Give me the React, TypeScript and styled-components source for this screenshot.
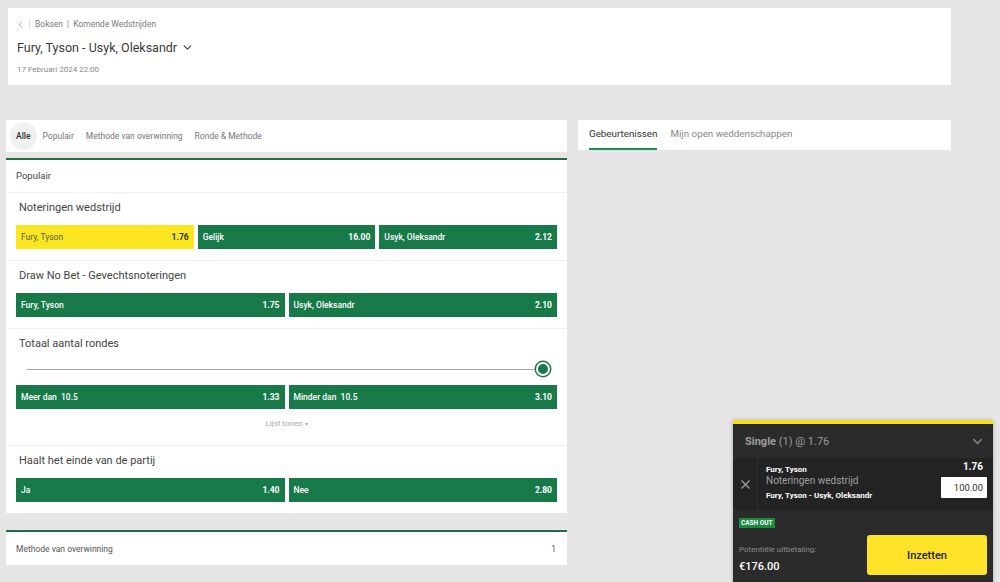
import React from 'react';
import styled, {createGlobalStyle} from "styled-components";

const GlobalStyle = createGlobalStyle`
    html, body {
        margin: 0;
        padding: 0;
        background: #e6e6e6;
        font-family: Roboto, "Liberation Sans", Arial, sans-serif;
        color: #333;
    }
    body {
        width: 1000px;
        height: 582px;
        overflow: hidden;
        position: relative;
    }
`

type Outcome = {
    label: string
    odds: string
    selected?: boolean
}

type MarketProps = {
    title: string
    outcomes: Outcome[]
    children?: React.ReactNode
    footer?: React.ReactNode
}

const Market = (props: MarketProps) => {
    return (
        <StyledMarket>
            <MarketTitle>{props.title}</MarketTitle>
            {props.children}
            <OutcomeRow $count={props.outcomes.length}>
                {props.outcomes.map(o => (
                    <OddsButton key={o.label} $selected={o.selected}>
                        <span>{o.label}</span>
                        <b>{o.odds}</b>
                    </OddsButton>
                ))}
            </OutcomeRow>
            {props.footer}
        </StyledMarket>
    );
};

const Chevron = ({color = "#555", size = 10}: { color?: string, size?: number }) => (
    <svg width={size} height={size} viewBox="0 0 10 10" fill="none">
        <path d="M2 3.5 L5 6.5 L8 3.5" stroke={color} strokeWidth="1.1" strokeLinecap="round" strokeLinejoin="round"/>
    </svg>
);

export default function App() {
    return (
        <Page>
            <GlobalStyle/>
            <HeaderCard>
                <Breadcrumb>
                    <svg width="8" height="8" viewBox="0 0 8 8" fill="none">
                        <path d="M5 1 L2 4 L5 7" stroke="#aaa" strokeWidth="0.9"/>
                    </svg>
                    <BreadSep/>
                    <span>Boksen</span>
                    <BreadBar>|</BreadBar>
                    <span>Komende Wedstrijden</span>
                </Breadcrumb>
                <EventTitle>
                    Fury, Tyson - Usyk, Oleksandr
                    <Chevron color="#444" size={11}/>
                </EventTitle>
                <EventDate>17 Februari 2024 22:00</EventDate>
            </HeaderCard>

            <Main>
                <LeftColumn>
                    <TabsCard>
                        <FilterTab $active>Alle</FilterTab>
                        <FilterTab>Populair</FilterTab>
                        <FilterTab>Methode van overwinning</FilterTab>
                        <FilterTab>Ronde &amp; Methode</FilterTab>
                    </TabsCard>

                    <GroupCard>
                        <GroupHeader>Populair</GroupHeader>
                        <Market
                            title="Noteringen wedstrijd"
                            outcomes={[
                                {label: "Fury, Tyson", odds: "1.76", selected: true},
                                {label: "Gelijk", odds: "16.00"},
                                {label: "Usyk, Oleksandr", odds: "2.12"},
                            ]}
                        />
                        <Market
                            title="Draw No Bet - Gevechtsnoteringen"
                            outcomes={[
                                {label: "Fury, Tyson", odds: "1.75"},
                                {label: "Usyk, Oleksandr", odds: "2.10"},
                            ]}
                        />
                        <Market
                            title="Totaal aantal rondes"
                            outcomes={[
                                {label: "Meer dan\u00a0\u00a010.5", odds: "1.33"},
                                {label: "Minder dan\u00a0\u00a010.5", odds: "3.10"},
                            ]}
                            footer={<ShowList>Lijst tonen <small>▾</small></ShowList>}
                        >
                            <Slider>
                                <SliderTrack/>
                                <SliderKnob/>
                            </Slider>
                        </Market>
                        <Market
                            title="Haalt het einde van de partij"
                            outcomes={[
                                {label: "Ja", odds: "1.40"},
                                {label: "Nee", odds: "2.80"},
                            ]}
                        />
                    </GroupCard>

                    <CollapsedCard>
                        <span>Methode van overwinning</span>
                        <span>1</span>
                    </CollapsedCard>
                </LeftColumn>

                <RightColumn>
                    <SideTabs>
                        <SideTab $active>Gebeurtenissen</SideTab>
                        <SideTab>Mijn open weddenschappen</SideTab>
                    </SideTabs>
                </RightColumn>
            </Main>

            <BetSlip>
                <SlipHeader>
                    <span>Single <em>(1) @ 1.76</em></span>
                    <Chevron color="#8a8a8a" size={13}/>
                </SlipHeader>
                <Selection>
                    <RemoveCell>
                        <svg width="11" height="11" viewBox="0 0 11 11">
                            <path d="M1.5 1.5 L9.5 9.5 M9.5 1.5 L1.5 9.5" stroke="#9a9a9a" strokeWidth="1.4"/>
                        </svg>
                    </RemoveCell>
                    <SelectionInfo>
                        <strong>Fury, Tyson</strong>
                        <MarketName>Noteringen wedstrijd</MarketName>
                        <strong>Fury, Tyson - Usyk, Oleksandr</strong>
                    </SelectionInfo>
                    <StakeCell>
                        <strong>1.76</strong>
                        <StakeInput>100.00</StakeInput>
                    </StakeCell>
                </Selection>
                <SlipFooter>
                    <CashOut>CASH OUT</CashOut>
                    <PayoutRow>
                        <Payout>
                            <span>Potentiële uitbetaling:</span>
                            <b>€176.00</b>
                        </Payout>
                        <PlaceButton>Inzetten</PlaceButton>
                    </PayoutRow>
                </SlipFooter>
            </BetSlip>
        </Page>
    );
}

const Page = styled.div`
    padding: 8px 49px 0 8px;
`
const HeaderCard = styled.div`
    background: #fff;
    height: 77px;
    box-sizing: border-box;
    padding: 11px 0 0 9px;
`
const Breadcrumb = styled.div`
    display: flex;
    align-items: center;
    gap: 4px;
    font-size: 8.5px;
    color: #7a7a7a;
    height: 10px;
    svg {
        margin-top: 1px;
    }
`
const BreadSep = styled.i`
    width: 1px;
    height: 8px;
    background: #ddd;
    margin-right: 1px;
`
const BreadBar = styled.span`
    color: #888;
`
const EventTitle = styled.div`
    display: flex;
    align-items: center;
    gap: 5px;
    margin-top: 10px;
    font-size: 12.5px;
    color: #3a3a3a;
    height: 16px;
`
const EventDate = styled.div`
    margin-top: 10px;
    font-size: 8px;
    color: #888;
`
const Main = styled.div`
    display: grid;
    grid-template-columns: 561px 373px;
    gap: 11px;
    margin: 35px 0 0 -2px;
    align-items: start;
`
const LeftColumn = styled.div`
    display: flex;
    flex-direction: column;
`
const TabsCard = styled.div`
    background: #fff;
    height: 32px;
    display: flex;
    align-items: center;
    padding-left: 4px;
`
const FilterTab = styled.div<{ $active?: boolean }>`
    font-size: 8.5px;
    color: ${p => p.$active ? "#333" : "#777"};
    font-weight: ${p => p.$active ? 500 : 400};
    padding: 0 6px;
    height: 28px;
    line-height: 28px;
    border-radius: 14px;
    background: ${p => p.$active ? "#f1f1f1" : "transparent"};
`
const GroupCard = styled.div`
    margin-top: 6px;
    background: #fff;
    border-top: 2px solid #1d6e45;
`
const GroupHeader = styled.div`
    height: 32px;
    line-height: 31px;
    padding-left: 10px;
    font-size: 9.5px;
    color: #444;
    border-bottom: 1px solid #efefef;
`
const StyledMarket = styled.div`
    padding: 6px 10px 11px;
    border-bottom: 1px solid #efefef;
    &:last-child {
        border-bottom: none;
        padding-bottom: 11px;
    }
`
const MarketTitle = styled.div`
    font-size: 11px;
    color: #444;
    height: 18px;
    line-height: 18px;
    padding-left: 3px;
    margin-bottom: 8px;
`
const OutcomeRow = styled.div<{ $count: number }>`
    display: grid;
    grid-template-columns: repeat(${p => p.$count}, 1fr);
    gap: 4px;
`
const OddsButton = styled.div<{ $selected?: boolean }>`
    height: 24px;
    display: flex;
    align-items: center;
    justify-content: space-between;
    padding: 0 5px;
    font-size: 8.5px;
    background: ${p => p.$selected ? "#fce622" : "#177a48"};
    color: ${p => p.$selected ? "#5b5a3a" : "#fff"};
    span {
        font-weight: ${p => p.$selected ? 400 : 500};
    }
    b {
        font-size: 8.5px;
        font-weight: 700;
        color: ${p => p.$selected ? "#333" : "#fff"};
    }
`
const Slider = styled.div`
    display: flex;
    align-items: center;
    padding: 0 7px 0 11px;
    height: 16px;
    margin: 4px 0 8px;
`
const SliderTrack = styled.div`
    flex: 1;
    height: 1px;
    background: #a6a6a6;
`
const SliderKnob = styled.div`
    width: 10px;
    height: 10px;
    border-radius: 50%;
    background: #177a48;
    border: 2px solid #fff;
    box-shadow: 0 0 0 1.5px #177a48;
`
const ShowList = styled.div`
    text-align: center;
    font-size: 8px;
    color: #a8a8a8;
    margin-top: 10px;
    margin-bottom: 6px;
    small {
        font-size: 6px;
    }
`
const CollapsedCard = styled.div`
    margin-top: 17px;
    background: #fff;
    border-top: 2px solid #1d6e45;
    height: 33px;
    display: flex;
    align-items: center;
    justify-content: space-between;
    padding: 0 11px 0 10px;
    font-size: 8.5px;
    color: #555;
`
const RightColumn = styled.div``
const SideTabs = styled.div`
    background: #fff;
    height: 30px;
    display: flex;
    padding-left: 11px;
    gap: 13px;
`
const SideTab = styled.div<{ $active?: boolean }>`
    font-size: 9.8px;
    color: ${p => p.$active ? "#333" : "#888"};
    line-height: 28px;
    border-bottom: 2px solid ${p => p.$active ? "#1f8a57" : "transparent"};
`
const BetSlip = styled.div`
    position: absolute;
    left: 733px;
    top: 420px;
    width: 260px;
    height: 170px;
    background: #2b2b2b;
    border-top: 4px solid #f7de1e;
    box-shadow: 0 0 4px rgba(0, 0, 0, 0.25);
    color: #fff;
`
const SlipHeader = styled.div`
    height: 34px;
    display: flex;
    align-items: center;
    justify-content: space-between;
    padding: 0 9px 0 12px;
    font-size: 11px;
    color: #9c9c9c;
    font-weight: 700;
    em {
        font-style: normal;
        font-weight: 400;
    }
`
const Selection = styled.div`
    height: 52px;
    background: #232323;
    display: flex;
`
const RemoveCell = styled.div`
    width: 24px;
    border-right: 1px solid #2f2f2f;
    display: flex;
    align-items: center;
    justify-content: center;
`
const SelectionInfo = styled.div`
    flex: 1;
    padding: 7px 0 0 8px;
    display: flex;
    flex-direction: column;
    font-size: 8px;
    strong {
        font-weight: 700;
        line-height: 10px;
    }
    strong:last-child {
        margin-top: 4px;
    }
`
const MarketName = styled.span`
    font-size: 10px;
    color: #a0a0a0;
    line-height: 12px;
`
const StakeCell = styled.div`
    display: flex;
    flex-direction: column;
    align-items: flex-end;
    padding: 3px 6px 0 0;
    strong {
        font-size: 10px;
        font-weight: 700;
        margin-right: 4px;
        line-height: 12px;
    }
`
const StakeInput = styled.div`
    margin-top: 4px;
    width: 46px;
    height: 21px;
    box-sizing: border-box;
    background: #fff;
    color: #333;
    font-size: 9.5px;
    text-align: right;
    line-height: 21px;
    padding-right: 4px;
    border-radius: 1px;
`
const SlipFooter = styled.div`
    padding: 8px 6px 0 6px;
`
const CashOut = styled.div`
    width: fit-content;
    background: #1b8a3e;
    color: #fff;
    font-size: 6.5px;
    font-weight: 700;
    padding: 1px 2px;
    line-height: 8px;
`
const PayoutRow = styled.div`
    display: flex;
    justify-content: space-between;
    align-items: flex-start;
    margin-top: 7px;
`
const Payout = styled.div`
    display: flex;
    flex-direction: column;
    margin-top: 10px;
    span {
        font-size: 8px;
        color: #8c8c8c;
        line-height: 10px;
    }
    b {
        font-size: 11px;
        font-weight: 500;
        margin-top: 5px;
        line-height: 14px;
    }
`
const PlaceButton = styled.div`
    width: 120px;
    height: 40px;
    background: #fde428;
    border-radius: 3px;
    color: #222;
    font-size: 11px;
    font-weight: 500;
    display: flex;
    align-items: center;
    justify-content: center;
`
